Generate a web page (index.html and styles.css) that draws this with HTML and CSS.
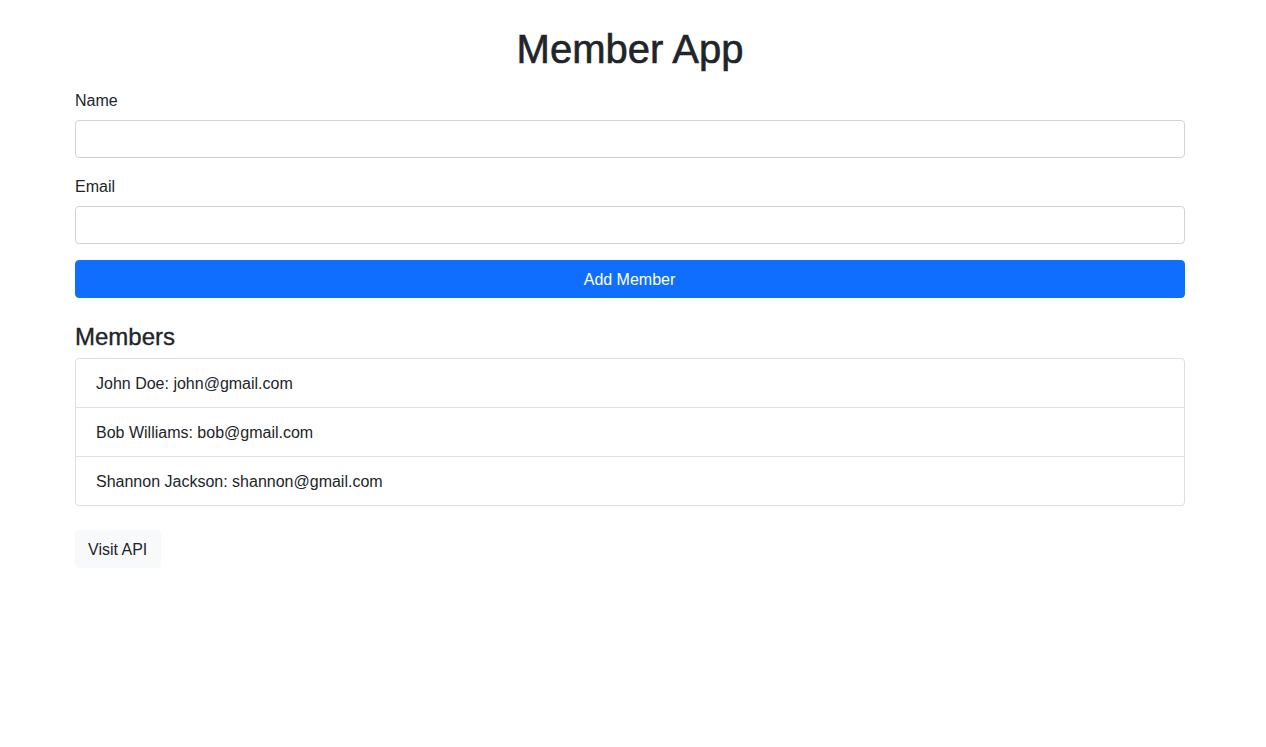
FILE: index.html
```html
<!DOCTYPE html>
<html lang="en">
<head>
<meta charset="utf-8">
<title>Member App</title>
<link rel="stylesheet" href="styles.css">
</head>
<body>
<div class="page">
  <h1 class="title">Member App</h1>
  <form class="form">
    <div class="field">
      <label class="label" for="name">Name</label>
      <input class="input" id="name" type="text">
    </div>
    <div class="field">
      <label class="label" for="email">Email</label>
      <input class="input" id="email" type="email">
    </div>
    <button class="btn btn-primary" type="button">Add Member</button>
  </form>
  <h4 class="section-title">Members</h4>
  <ul class="list">
    <li class="list-item">John Doe: john@gmail.com</li>
    <li class="list-item">Bob Williams: bob@gmail.com</li>
    <li class="list-item">Shannon Jackson: shannon@gmail.com</li>
  </ul>
  <div class="actions">
    <a class="btn btn-light" href="#">Visit API</a>
  </div>
</div>
</body>
</html>
```

FILE: styles.css
```css
* { box-sizing: border-box; }
html, body { margin: 0; padding: 0; background: #fff; }
body {
  font-family: "Liberation Sans", Arial, sans-serif;
  font-size: 16px;
  line-height: 24px;
  color: #212529;
}
.page {
  padding: 24px 81px 0 75px;
}
.title {
  margin: 0 0 16px;
  padding-top: 1px;
  height: 48px;
  font-size: 40px;
  line-height: 48px;
  font-weight: 500;
  text-align: center;
  -webkit-text-stroke: 0.6px currentColor;
}
.form { display: flex; flex-direction: column; }
.field { display: flex; flex-direction: column; margin-bottom: 16px; }
.label { display: block; margin-bottom: 8px; padding-top: 1px; height: 24px; line-height: 24px; }
.input {
  display: block;
  width: 100%;
  height: 38px;
  padding: 6px 12px;
  font: inherit;
  color: #212529;
  background: #fff;
  border: 1px solid #ced4da;
  border-radius: 4px;
  outline: none;
}
.btn {
  display: inline-block;
  height: 38px;
  padding: 7px 13px 5px 12px;
  font: inherit;
  line-height: 24px;
  text-align: center;
  text-decoration: none;
  border: 1px solid transparent;
  border-radius: 4px;
  cursor: pointer;
}
.btn-primary {
  width: 100%;
  color: #fff;
  background: #0f6efd;
  border-color: #0f6efd;
}
.btn-light {
  color: #212529;
  background: #f8f9fa;
  border-color: #f8f9fa;
}
.section-title {
  margin: 24px 0 8px;
  padding-top: 1px;
  height: 28px;
  font-size: 24px;
  line-height: 28px;
  font-weight: 500;
  -webkit-text-stroke: 0.35px currentColor;
}
.list {
  list-style: none;
  margin: 0;
  padding: 0;
  border: 1px solid #dfdfdf;
  border-radius: 4px;
}
.list-item {
  padding: 13px 20px 11px;
  line-height: 24px;
  border-bottom: 1px solid #dfdfdf;
}
.list-item:last-child { border-bottom: none; }
.actions { margin-top: 24px; display: flex; }
```
